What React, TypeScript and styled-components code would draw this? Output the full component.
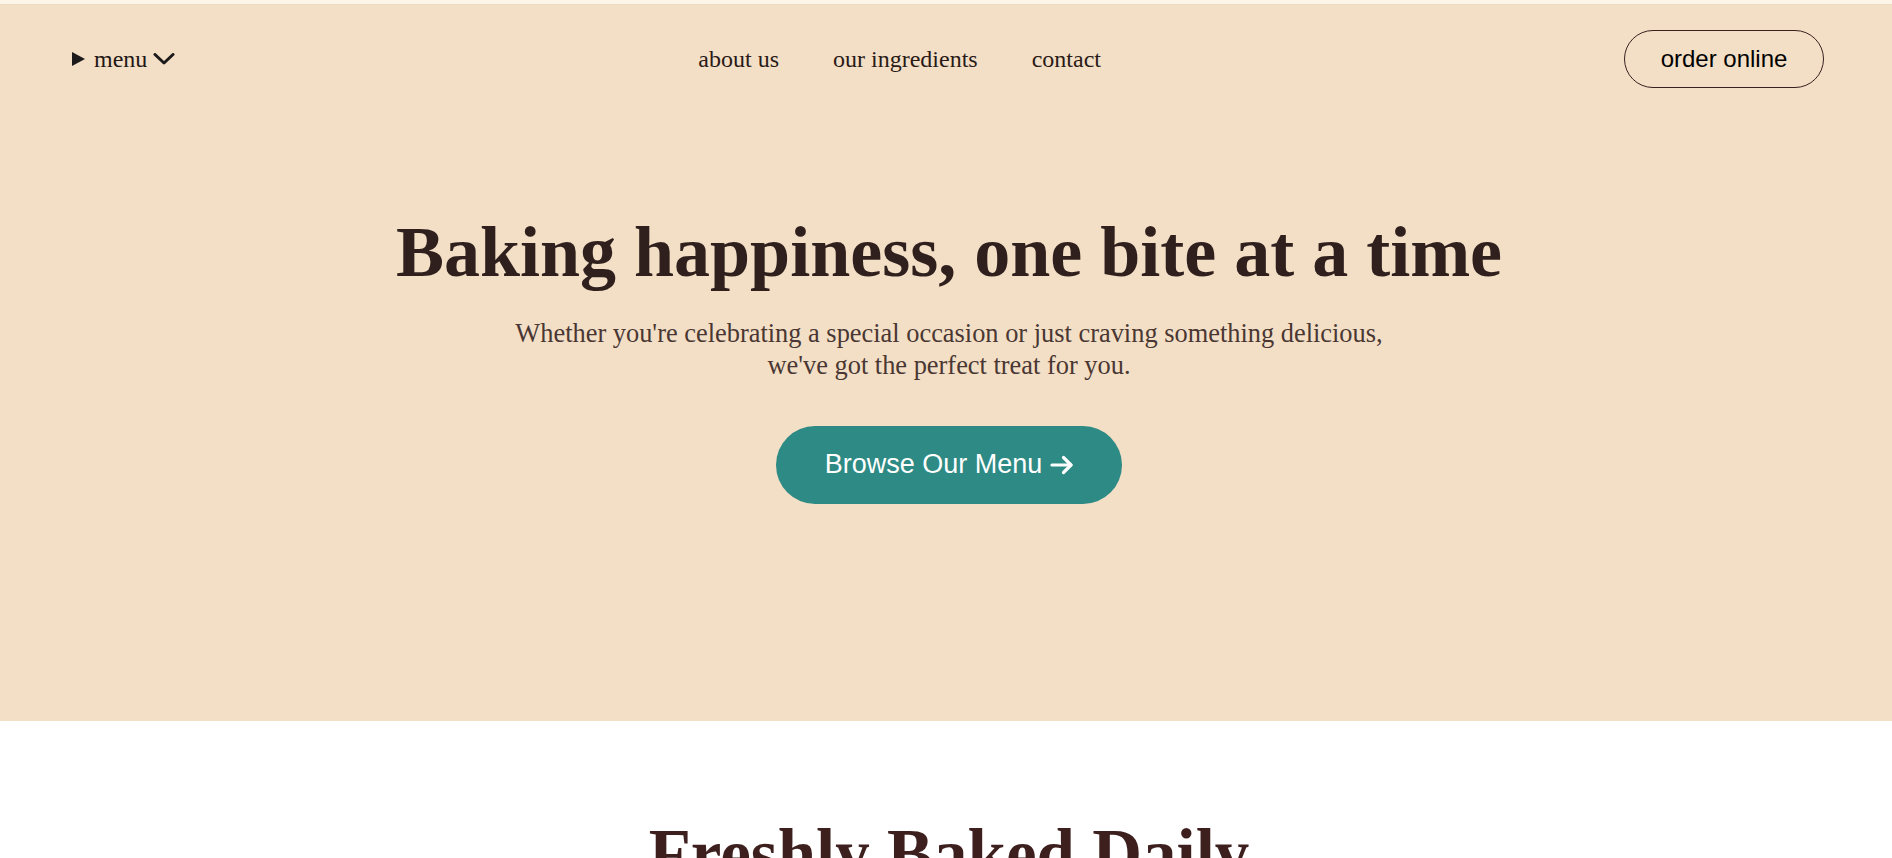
import React from "react";
import styled, { createGlobalStyle } from "styled-components";

const GlobalStyle = createGlobalStyle`
  * { box-sizing: border-box; }
  html, body { margin: 0; padding: 0; background: #ffffff; }
  body { font-family: "Liberation Serif", "Times New Roman", serif; }
`;

const Page = styled.div`
  display: flex;
  flex-direction: column;
  min-height: 100vh;
`;

const TopStrip = styled.div`
  height: 5px;
  background: #fdf5e7;
  border-bottom: 1px solid #ecdbc2;
`;

const Hero = styled.section`
  display: flex;
  flex-direction: column;
  align-items: stretch;
  height: 716px;
  background: #f3dfc6;
`;

const Header = styled.header`
  display: flex;
  align-items: center;
  justify-content: space-between;
  height: 58px;
  margin-top: 25px;
  padding: 0 68px 0 72px;
`;

const MenuToggle = styled.button`
  display: flex;
  align-items: center;
  gap: 0;
  padding: 0;
  border: none;
  background: none;
  cursor: pointer;
  font-family: "Liberation Serif", "Times New Roman", serif;
  font-size: 24px;
  color: #221715;
`;

const Marker = styled.span`
  width: 0;
  height: 0;
  border-top: 7px solid transparent;
  border-bottom: 7px solid transparent;
  border-left: 13px solid #1c1a1a;
  margin-right: 9px;
`;

const MenuLabel = styled.span`
  margin-right: 6px;
`;

const Nav = styled.nav`
  display: flex;
  align-items: center;
  gap: 54px;
`;

const NavLink = styled.a`
  font-family: "Liberation Serif", "Times New Roman", serif;
  font-size: 24px;
  color: #2a1a17;
  text-decoration: none;
`;

const OrderButton = styled.button`
  height: 58px;
  width: 200px;
  border: 1px solid #3a1f1e;
  border-radius: 29px;
  background: transparent;
  font-family: "Liberation Sans", Arial, sans-serif;
  font-size: 24px;
  color: #000000;
  cursor: pointer;
`;

const HeroBody = styled.div`
  display: flex;
  flex-direction: column;
  align-items: center;
  text-align: center;
  padding-left: 6px;
`;

const Title = styled.h1`
  margin: 123px 0 0;
  font-family: "Liberation Serif", "Times New Roman", serif;
  font-weight: 700;
  font-size: 72px;
  line-height: 1.15;
  color: #2f1f1d;
`;

const Lead = styled.p`
  margin: 23px 0 0;
  font-family: "Liberation Serif", "Times New Roman", serif;
  font-size: 26.4px;
  line-height: 32px;
  color: #4a3733;
`;

const BrowseButton = styled.button`
  display: inline-flex;
  align-items: center;
  gap: 8px;
  height: 78px;
  margin-top: 45px;
  padding: 0 48px 0 49px;
  border: none;
  border-radius: 39px;
  background: #2e8a84;
  color: #ffffff;
  font-family: "Liberation Sans", Arial, sans-serif;
  font-size: 27px;
  cursor: pointer;
`;

const Section = styled.section`
  display: flex;
  flex-direction: column;
  align-items: center;
  padding: 94px 0 0 6px;
  background: #ffffff;
`;

const SectionTitle = styled.h2`
  margin: 0;
  font-family: "Liberation Serif", "Times New Roman", serif;
  font-weight: 700;
  font-size: 69px;
  line-height: 1.15;
  color: #3d1f1e;
`;

const Chevron = () => (
  <svg width="22" height="12" viewBox="0 0 22 12" fill="none" aria-hidden>
    <polyline points="2,1.5 11,10 20,1.5" stroke="#1c1a1a" strokeWidth="3" strokeLinecap="round" strokeLinejoin="round" />
  </svg>
);

const Arrow = () => (
  <svg width="24" height="20" viewBox="0 0 24 20" fill="none" aria-hidden>
    <line x1="2" y1="10" x2="21" y2="10" stroke="#ffffff" strokeWidth="3.2" strokeLinecap="round" />
    <polyline points="13.5,2.5 21,10 13.5,17.5" stroke="#ffffff" strokeWidth="3.2" strokeLinecap="round" strokeLinejoin="round" />
  </svg>
);

export default function App() {
  return (
    <>
      <GlobalStyle />
      <Page>
        <TopStrip />
        <Hero>
          <Header>
            <MenuToggle>
              <Marker />
              <MenuLabel>menu</MenuLabel>
              <Chevron />
            </MenuToggle>
            <Nav>
              <NavLink href="#about">about us</NavLink>
              <NavLink href="#ingredients">our ingredients</NavLink>
              <NavLink href="#contact">contact</NavLink>
            </Nav>
            <OrderButton>order online</OrderButton>
          </Header>
          <HeroBody>
            <Title>Baking happiness, one bite at a time</Title>
            <Lead>
              Whether you're celebrating a special occasion or just craving something delicious,
              <br />
              we've got the perfect treat for you.
            </Lead>
            <BrowseButton>
              Browse Our Menu
              <Arrow />
            </BrowseButton>
          </HeroBody>
        </Hero>
        <Section>
          <SectionTitle>Freshly Baked Daily</SectionTitle>
        </Section>
      </Page>
    </>
  );
}
